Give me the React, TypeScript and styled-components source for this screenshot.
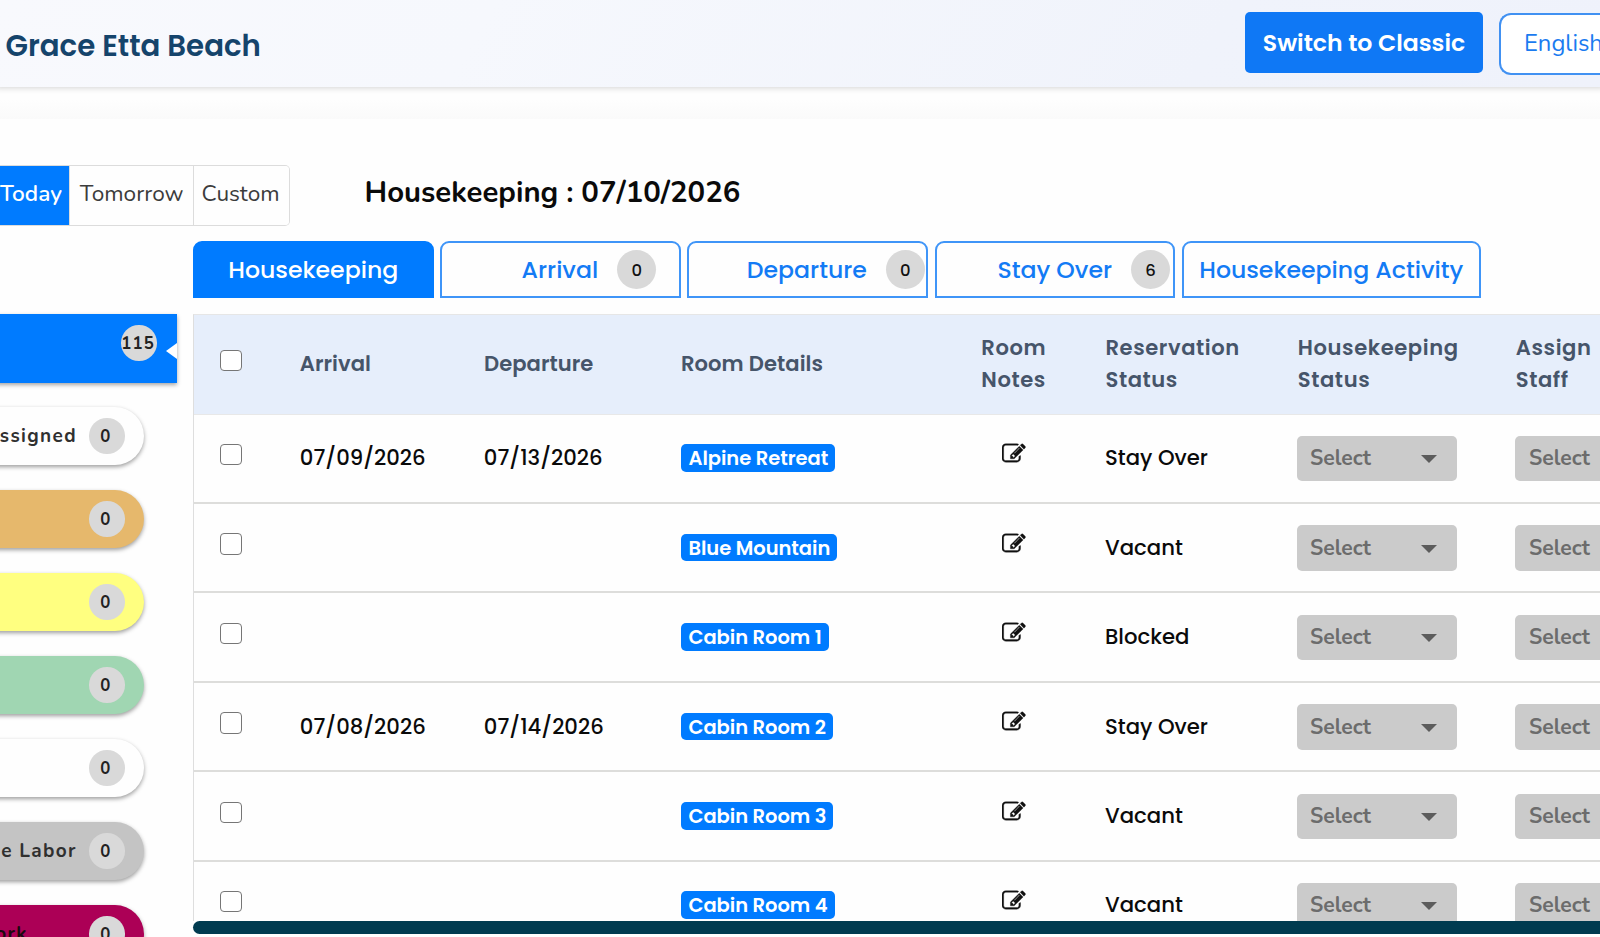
import React from "react";
import styled, { createGlobalStyle } from "styled-components";

const GEO = `Poppins, Inter, "Liberation Sans", sans-serif`;
const HUM = `Nunito, "Noto Sans", "Liberation Sans", sans-serif`;
const BLUE = "#007bff";

const GlobalStyle = createGlobalStyle`
  * { box-sizing: border-box; }
  body { margin: 0; overflow: hidden; background: #fefefe; font-family: ${GEO}; }
  button { font: inherit; cursor: pointer; }
`;

const Page = styled.div`
  width: 1600px;
  height: 937px;
  display: flex;
  flex-direction: column;
  overflow: hidden;
`;

const Header = styled.header`
  flex: none;
  position: relative;
  z-index: 1;
  height: 86.5px;
  display: flex;
  align-items: flex-start;
  background: linear-gradient(120deg, #f8f9fd 0%, #f6f8fd 30%, #f0f3fb 75%, #eff2fb 100%);
  box-shadow: 0 -3px 6px 4px rgba(0, 0, 0, 0.17);
`;

const PropertyName = styled.h1`
  flex: 1;
  margin: 0;
  padding: 28.5px 0 0 5.5px;
  font-size: 29.25px;
  font-weight: 600;
  line-height: 34px;
  color: #15446b;
`;

const ClassicButton = styled.button`
  width: 238px;
  height: 61.5px;
  margin: 11.5px 16px 0 0;
  padding: 0 0 0.5px;
  border: 0;
  border-radius: 5px;
  background: #0f78f5;
  color: #fff;
  font-size: 23.6px;
  font-weight: 600;
`;

const LanguageButton = styled.button`
  width: 101px;
  height: 62px;
  margin-top: 13px;
  padding: 0 0 2.5px 23px;
  border: 2px solid #4191f2;
  border-right: 0;
  border-radius: 12px 0 0 12px;
  background: #fff;
  color: #1a7bf0;
  font-family: ${HUM};
  font-size: 23.8px;
  text-align: left;
  overflow: hidden;
`;

const Band = styled.div`
  flex: none;
  height: 32px;
  background: linear-gradient(#fefefe 40%, #fafafa);
`;

const Toolbar = styled.section`
  flex: none;
  height: 122.5px;
  padding-top: 46px;
  display: flex;
  align-items: flex-start;
`;

const DateGroup = styled.div`
  display: flex;
  width: 290px;
  height: 61px;
  border: 1.5px solid #dcdcdc;
  border-left: 0;
  border-radius: 0 5px 5px 0;
  overflow: hidden;
`;

const DateButton = styled.button<{ $w: number; $inset: number; $active?: boolean }>`
  flex: none;
  width: ${(p) => p.$w}px;
  padding: 0 0 2.5px ${(p) => p.$inset}px;
  border: 0;
  border-left: ${(p) => (p.$active ? "0" : "1px solid #dcdcdc")};
  background: ${(p) => (p.$active ? BLUE : "#fefefe")};
  color: ${(p) => (p.$active ? "#fff" : "#3c3c3c")};
  font-family: ${HUM};
  font-size: 22.6px;
  font-weight: ${(p) => (p.$active ? 600 : 400)};
  text-align: left;
`;

const PageTitle = styled.h2`
  margin: 0 0 0 74.5px;
  padding-top: 8px;
  font-family: ${HUM};
  font-size: 29.3px;
  font-weight: 700;
  line-height: 38px;
  white-space: nowrap;
  color: #0a0a0a;
`;

const Body = styled.div`
  flex: 1;
  min-height: 0;
  display: grid;
  grid-template-columns: 193px 1fr;
`;

const Sidebar = styled.aside`
  padding-top: 73px;
  display: flex;
  flex-direction: column;
  gap: 24.3px;
  overflow: hidden;
`;

const AllRooms = styled.div`
  flex: none;
  position: relative;
  width: 186.5px;
  height: 68.5px;
  margin-left: -10px;
  padding: 11.3px 19.8px 0 0;
  display: flex;
  justify-content: flex-end;
  background: ${BLUE};
  box-shadow: 0 2px 4px rgba(0, 0, 0, 0.35);

  &::after {
    content: "";
    position: absolute;
    right: 0;
    top: 29.3px;
    border: 8px solid transparent;
    border-left: 0;
    border-right: 11.5px solid #fff;
  }
`;

const Pill = styled.div<{ $bg: string; $fg?: string }>`
  flex: none;
  width: 154px;
  height: 58.7px;
  margin-left: -10px;
  padding-right: 19.5px;
  display: flex;
  align-items: center;
  justify-content: flex-end;
  border-radius: 0 30px 30px 0;
  background: ${(p) => p.$bg};
  color: ${(p) => p.$fg ?? "#303030"};
  box-shadow: 0 2px 4px rgba(0, 0, 0, 0.38);
  font-family: ${HUM};
  font-size: 19px;
  font-weight: 700;
  letter-spacing: 1.35px;
  white-space: nowrap;
`;

const PillLabel = styled.span<{ $gap?: number }>`
  margin-right: ${(p) => p.$gap ?? 12}px;
`;

const CountBadge = styled.span`
  flex: none;
  width: 35.6px;
  height: 35.6px;
  display: flex;
  align-items: center;
  justify-content: center;
  padding: 0 1.5px 0 0;
  border-radius: 50%;
  background: #d9d9d9;
  color: #222;
  font-family: ${HUM};
  font-size: 16.8px;
  font-weight: 700;
  letter-spacing: 1.2px;
`;

const Main = styled.main`
  min-width: 0;
  display: flex;
  flex-direction: column;
`;

const Tabs = styled.nav`
  flex: none;
  display: flex;
  gap: 6.7px;
  height: 56.5px;
  margin-bottom: 16.5px;
`;

const Tab = styled.button<{ $active?: boolean; $end?: number; $w?: number }>`
  width: ${(p) => p.$w ?? 240.5}px;
  padding: 0 ${(p) => p.$end ?? 0}px 0 0;
  display: flex;
  align-items: center;
  justify-content: ${(p) => (p.$end === undefined ? "center" : "flex-end")};
  gap: 19px;
  border: 2px solid ${(p) => (p.$active ? BLUE : "#3f95f8")};
  border-radius: 9px 9px 0 0;
  background: ${(p) => (p.$active ? BLUE : "#fefefe")};
  color: ${(p) => (p.$active ? "#fff" : "#137bf5")};
  font-size: 23.6px;
  font-weight: 500;
  white-space: nowrap;
`;

const TabLabel = styled.span`
  padding-top: 1px;
`;

const TabCount = styled.span`
  width: 39px;
  height: 39px;
  padding-top: 2px;
  display: flex;
  align-items: center;
  justify-content: center;
  border-radius: 50%;
  background: #d9d9d9;
  color: #111;
  font-size: 16.5px;
`;

const Table = styled.div`
  flex: none;
  height: 606.5px;
  overflow: hidden;
  border-left: 1px solid #dedede;
  border-top: 1px solid #e6e6e6;
`;

const COLUMNS = "105.5px 183.5px 198px 299.5px 124px 192.5px 218px 160px";

const HeadRow = styled.div`
  display: grid;
  grid-template-columns: ${COLUMNS};
  height: 99.5px;
  background: #e6eefb;
  border-bottom: 1px solid #e8e8e8;
`;

const HeadCell = styled.div<{ $inset: number; $spaced: boolean }>`
  padding: 0 0 0.5px ${(p) => p.$inset}px;
  display: flex;
  flex-direction: column;
  justify-content: center;
  color: #46556a;
  font-size: 21.1px;
  font-weight: 600;
  line-height: 32.4px;
  letter-spacing: ${(p) => (p.$spaced ? 0.58 : 0.05)}px;
  white-space: nowrap;
`;

const Row = styled.div`
  display: grid;
  grid-template-columns: ${COLUMNS};
  height: 89.42px;
  padding-top: 1px;
  border-bottom: 2px solid #dddddb;
`;

const Cell = styled.div<{ $lift?: number; $inset?: number }>`
  display: flex;
  align-items: center;
  padding-bottom: ${(p) => p.$lift ?? 0}px;
  padding-left: ${(p) => p.$inset ?? 0}px;
`;

const CellText = styled.span`
  color: #0a0a0a;
  font-size: 21.2px;
  font-weight: 500;
  white-space: nowrap;
`;

const Check = styled.input.attrs({ type: "checkbox" })`
  appearance: none;
  width: 21.5px;
  height: 21.5px;
  margin: 0;
  border: 1.6px solid #767676;
  border-radius: 4px;
  background: #fff;
`;

const RoomTag = styled.span`
  height: 27.7px;
  padding: 0 7px 0 7.5px;
  border-radius: 5px;
  background: ${BLUE};
  color: #fff;
  font-size: 19.5px;
  font-weight: 600;
  line-height: 29px;
  letter-spacing: -0.05px;
  white-space: nowrap;
`;

const Select = styled.div<{ $inset: number }>`
  width: 159.5px;
  height: 45.5px;
  padding: 0 20px 0.5px ${(p) => p.$inset}px;
  display: flex;
  align-items: center;
  justify-content: space-between;
  border-radius: 5px;
  background: #cbcbcb;
  color: #6c6c6c;
  font-family: ${HUM};
  font-size: 21.1px;
  font-weight: 700;
`;

const Caret = styled.span`
  margin-top: 2px;
  border: 8px solid transparent;
  border-top-color: #5c5c5c;
  border-bottom: 0;
`;

const ScrollBar = styled.div`
  flex: none;
  height: 13.5px;
  border-radius: 7px 0 0 7px;
  background: #003b50;
`;

const EditIcon = () => (
  <svg width="23.6" height="23.6" viewBox="0 0 1792 1792" fill="#111" stroke="#111" strokeWidth="25">
    <path d="M888 1184l116-116-152-152-116 116v56h96v96h56zm440-720q-16-16-33 1l-350 350q-17 17-1 33t33-1l350-350q17-17 1-33zm80 594v190q0 119-84.500 203.500t-203.500 84.500h-832q-119 0-203.500-84.500t-84.500-203.500v-832q0-119 84.500-203.500t203.500-84.500h832q63 0 117 25 15 7 18 23 3 17-9 29l-49 49q-14 14-32 8-23-6-45-6h-832q-66 0-113 47t-47 113v832q0 66 47 113t113 47h832q66 0 113-47t47-113v-126q0-13 9-22l64-64q15-15 35-7t20 29zm-96-738l288 288-672 672h-288v-288zm444 132l-92 92-288-288 92-92q28-28 68-28t68 28l152 152q28 28 28 68t-28 68z" />
  </svg>
);

const heads: { lines: string[]; inset: number }[] = [
  { lines: ["Arrival"], inset: 0.3 },
  { lines: ["Departure"], inset: 1 },
  { lines: ["Room Details"], inset: 0 },
  { lines: ["Room", "Notes"], inset: 0.8 },
  { lines: ["Reservation", "Status"], inset: 1 },
  { lines: ["Housekeeping", "Status"], inset: 0.8 },
  { lines: ["Assign", "Staff"], inset: 0.8 },
];

const pills = [
  { label: "ssigned", bg: "#fefefe" },
  { label: "", bg: "#e6b86c" },
  { label: "", bg: "#ffff80" },
  { label: "", bg: "#a0d6b2" },
  { label: "", bg: "#fefefe" },
  { label: "e Labor", bg: "#c4c4c4" },
  { label: "ork", bg: "#ac0056", fg: "#1a0a10", gap: 61 },
];

const rooms = [
  { from: "07/09/2026", to: "07/13/2026", room: "Alpine Retreat", status: "Stay Over" },
  { from: "", to: "", room: "Blue Mountain", status: "Vacant" },
  { from: "", to: "", room: "Cabin Room 1", status: "Blocked" },
  { from: "07/08/2026", to: "07/14/2026", room: "Cabin Room 2", status: "Stay Over" },
  { from: "", to: "", room: "Cabin Room 3", status: "Vacant" },
  { from: "", to: "", room: "Cabin Room 4", status: "Vacant" },
];

export default function App() {
  return (
    <Page>
      <GlobalStyle />
      <Header>
        <PropertyName>Grace Etta Beach</PropertyName>
        <ClassicButton>Switch to Classic</ClassicButton>
        <LanguageButton>English</LanguageButton>
      </Header>
      <Band />
      <Toolbar>
        <DateGroup>
          <DateButton $active $w={69.3} $inset={0}>Today</DateButton>
          <DateButton $w={123.7} $inset={9.5}>Tomorrow</DateButton>
          <DateButton $w={97} $inset={7.5}>Custom</DateButton>
        </DateGroup>
        <PageTitle>Housekeeping : 07/10/2026</PageTitle>
      </Toolbar>
      <Body>
        <Sidebar>
          <AllRooms>
            <CountBadge>115</CountBadge>
          </AllRooms>
          {pills.map((p, i) => (
            <Pill key={i} $bg={p.bg} $fg={p.fg}>
              {p.label && <PillLabel $gap={p.gap}>{p.label}</PillLabel>}
              <CountBadge>0</CountBadge>
            </Pill>
          ))}
        </Sidebar>
        <Main>
          <Tabs>
            <Tab $active><TabLabel>Housekeeping</TabLabel></Tab>
            <Tab $end={22.5}><TabLabel>Arrival</TabLabel><TabCount>0</TabCount></Tab>
            <Tab $end={1}><TabLabel>Departure</TabLabel><TabCount>0</TabCount></Tab>
            <Tab $end={3}><TabLabel>Stay Over</TabLabel><TabCount>6</TabCount></Tab>
            <Tab $w={299}><TabLabel>Housekeeping Activity</TabLabel></Tab>
          </Tabs>
          <Table>
            <HeadRow>
              <Cell $lift={7.5} $inset={26.3}><Check /></Cell>
              {heads.map((h, i) => (
                <HeadCell key={i} $inset={h.inset} $spaced={h.lines.length > 1}>
                  {h.lines.map((text) => <span key={text}>{text}</span>)}
                </HeadCell>
              ))}
            </HeadRow>
            {rooms.map((r) => (
              <Row key={r.room}>
                <Cell $lift={8} $inset={26.3}><Check /></Cell>
                <Cell $lift={1.5} $inset={0.3}><CellText>{r.from}</CellText></Cell>
                <Cell $lift={1.5} $inset={0.8}><CellText>{r.to}</CellText></Cell>
                <Cell $lift={1}><RoomTag>{r.room}</RoomTag></Cell>
                <Cell $lift={9.5} $inset={21.5}><EditIcon /></Cell>
                <Cell $lift={1.5} $inset={0.5}><CellText>{r.status}</CellText></Cell>
                <Cell><Select $inset={12.9}>Select<Caret /></Select></Cell>
                <Cell><Select $inset={13.9}>Select<Caret /></Select></Cell>
              </Row>
            ))}
          </Table>
          <ScrollBar />
        </Main>
      </Body>
    </Page>
  );
}
